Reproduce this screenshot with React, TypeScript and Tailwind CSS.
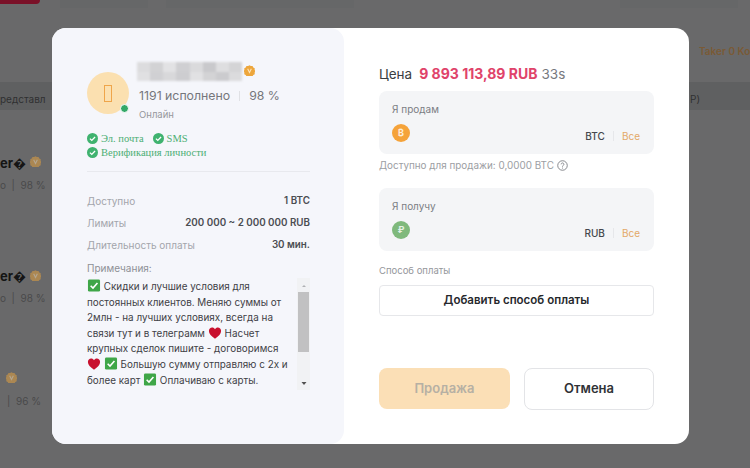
import React from "react";

const font = "font-['Inter','Noto_Sans',sans-serif]";

const CheckBadge = () => (
  <svg width="11" height="11" viewBox="0 0 12 12" className="shrink-0">
    <circle cx="6" cy="6" r="6" fill="#3fb26f" />
    <path d="M3.2 6.1l2 2 3.6-3.8" fill="none" stroke="#fff" strokeWidth="1.4" />
  </svg>
);

const Vip = ({ className }: { className?: string }) => (
  <svg width="11" height="11" viewBox="0 0 12 12" className={className}>
    <path
      d="M6 .2l1.500 1 1.800-.1.8 1.600 1.600.8-.1 1.800 1 1.500-1 1.500.1 1.800-1.600.8-.8 1.600-1.800-.1-1.500 1-1.500-1-1.800.1-.8-1.600-1.600-.8.1-1.800-1-1.500 1-1.500-.1-1.800 1.600-.8.8-1.600 1.800.1z"
      fill="#eda63c"
    />
    <path d="M4 4.200l2 4 2-4" fill="none" stroke="#fde3b8" strokeWidth="1.200" />
  </svg>
);

const GreenBox = () => (
  <svg width="14" height="13" viewBox="0 0 14 14" className="inline-block align-[-2px]">
    <rect x="0.5" y="0.5" width="13" height="13" rx="1.500" fill="#3fa648" />
    <path d="M3.400 7.200l2.500 2.500 4.800-5.400" fill="none" stroke="#fff" strokeWidth="1.700" />
  </svg>
);

const Heart = () => (
  <svg width="14" height="12" viewBox="0 0 14 13" className="inline-block align-[-2px]">
    <path d="M7 12.600C3 9.600.4 7.400.4 4.200.4 2 2 .6 3.900.6 5.200.6 6.300 1.300 7 2.500 7.700 1.300 8.800.6 10.100.6 12 .6 13.600 2 13.600 4.200 13.600 7.400 11 9.600 7 12.600Z" fill="#c8102e" />
  </svg>
);

const blurBlocks = [
  "#dcdcde", "#d2d2d4", "#e2e2e4", "#cfcfd2", "#dadadc", "#c9c9cc", "#dedee0", "#d4d4d6",
  "#e0e0e2", "#d0d0d3", "#d8d8da", "#cdcdd0", "#e1e1e3", "#d3d3d5", "#cbcbce", "#dbdbdd",
];

const Row = ({ label, value }: { label: string; value: string }) => (
  <div className="flex items-center justify-between">
    <span className="text-[10px] text-[#a3a5ab]">{label}</span>
    <span className="text-[9.8px] font-semibold text-[#4b4d52]">{value}</span>
  </div>
);

const AmountBox = ({
  label,
  code,
  icon,
  iconBg,
}: {
  label: string;
  code: string;
  icon: string;
  iconBg: string;
}) => (
  <div className="flex h-[63px] w-[275px] flex-col rounded-lg bg-[#f4f5f7] px-[13px] pt-[11px]">
    <span className="text-[10px] leading-[14px] text-[#7b7d83]">{label}</span>
    <div className="mt-[8px] flex items-start justify-between">
      <span className={`flex h-[18px] w-[18px] items-center justify-center rounded-full text-[9px] font-bold text-white/80 ${iconBg}`}>
        {icon}
      </span>
      <div className="mt-[5px] flex items-center pr-[1px] text-[10px] leading-[14px]">
        <span className="font-medium text-[#45474c]">{code}</span>
        <span className="mx-[8px] h-[10px] w-px bg-[#e6e7ea]" />
        <span className="text-[#e3a868]">Все</span>
      </div>
    </div>
  </div>
);

export default function App() {
  return (
    <div className={`relative h-[468px] w-[750px] overflow-hidden bg-[#69696a] ${font}`}>
      {/* Page behind the dimmed overlay */}
      <div className="absolute left-0 top-0 h-[4px] w-[40px] rounded-br bg-[#7a1128]" />
      <div className="absolute left-[60px] top-0 flex h-[8px] gap-[18px]">
        <div className="w-[88px] bg-[#666768]" />
        <div className="w-[188px] bg-[#666768]" />
      </div>
      <div className="absolute left-[620px] top-0 h-[8px] w-[118px] bg-[#666768]" />
      <div className="absolute left-0 top-[82px] h-[28px] w-[750px] bg-[#5f6061]" />
      <span className="absolute left-0 top-[92px] text-[10px] leading-[14px] text-[#2f3031]">редставл</span>
      <span className="absolute left-[699px] top-[44px] whitespace-nowrap text-[10px] font-semibold leading-[14px] text-[#7a5a35]">Taker 0 Ko</span>
      <span className="absolute left-[690px] top-[92px] text-[10px] leading-[14px] text-[#2f3031]">P)</span>

      <span className="absolute left-0 top-[155px] text-[13px] font-bold leading-[16px] text-[#151515]">er�</span>
      <Vip className="absolute left-[30px] top-[156px] opacity-50" />
      <span className="absolute left-0 top-[178px] text-[10px] leading-[14px] text-[#4a4a4b]">o&nbsp;&nbsp;|&nbsp;&nbsp;98 %</span>
      <span className="absolute left-0 top-[268px] text-[13px] font-bold leading-[16px] text-[#151515]">er�</span>
      <Vip className="absolute left-[30px] top-[270px] opacity-50" />
      <span className="absolute left-0 top-[291px] text-[10px] leading-[14px] text-[#4a4a4b]">o&nbsp;&nbsp;|&nbsp;&nbsp;98 %</span>
      <Vip className="absolute left-[6px] top-[372px] opacity-50" />
      <span className="absolute left-[7px] top-[394px] text-[10px] leading-[14px] text-[#4a4a4b]">|&nbsp;&nbsp;96 %</span>

      {/* Modal */}
      <div className="absolute left-[52px] top-[28px] flex h-[416px] w-[637px] rounded-[14px] bg-white">
        <div className="flex w-[292px] flex-col rounded-[14px] bg-[#f5f6fb] pl-[35px] pr-[34px] pt-[34px]">
          <div className="flex">
            <div className="relative mt-[10px] flex h-[42px] w-[42px] items-center justify-center rounded-full bg-[#fbe0b0]">
              <div className="h-[17px] w-[8px] border-[1.5px] border-[#efa54a]" />
              <div className="absolute bottom-[1px] right-0 h-[9px] w-[9px] rounded-full border border-white bg-[#33a868]" />
            </div>
            <div className="ml-[8px] flex flex-col">
              <div className="flex items-center">
                <div className="grid h-[19px] w-[105px] grid-cols-8 blur-[1px]">
                  {blurBlocks.map((c, i) => (
                    <div key={i} style={{ backgroundColor: c }} />
                  ))}
                </div>
                <Vip className="ml-[2px] mt-[-3px]" />
              </div>
              <div className="ml-[2px] mt-[7px] flex items-center text-[12.3px] leading-[16px] text-[#75777c]">
                <span>1191 исполнено</span>
                <span className="mx-[9px] h-[10px] w-px bg-[#e0e1e5]" />
                <span>98 %</span>
              </div>
              <span className="ml-[2px] mt-[5px] text-[9.5px] leading-[12px] text-[#95979c]">Онлайн</span>
            </div>
          </div>

          <div className="mt-[11px] flex flex-col gap-[1px] font-['Liberation_Serif',serif] text-[10.5px] leading-[13px] text-[#4cae74]">
            <div className="flex items-center gap-[3px]">
              <CheckBadge />
              <span>Эл. почта</span>
              <span className="ml-[6px]"><CheckBadge /></span>
              <span>SMS</span>
            </div>
            <div className="flex items-center gap-[3px]">
              <CheckBadge />
              <span>Верификация личности</span>
            </div>
          </div>

          <div className="mt-[12px] h-px w-full bg-[#e8e9ee]" />

          <div className="mt-[22px] flex flex-col gap-[8px] leading-[14px]">
            <Row label="Доступно" value="1 BTC" />
            <Row label="Лимиты" value="200 000 ~ 2 000 000 RUB" />
            <Row label="Длительность оплаты" value="30 мин." />
          </div>

          <span className="mt-[9px] text-[10px] leading-[14px] text-[#8e9096]">Примечания:</span>
          <div className="mt-[3px] flex h-[112px] justify-between">
            <p className="mt-[1px] w-[205px] text-[9.9px] leading-[15.6px] text-[#3f4146]">
              <GreenBox /> Скидки и лучшие условия для постоянных клиентов. Меняю суммы от 2млн - на лучших условиях, всегда на связи тут и в телеграмм <Heart /> Насчет крупных сделок пишите - договоримся <Heart /> <GreenBox /> Большую сумму отправляю с 2х и более карт <GreenBox /> Оплачиваю с карты.
            </p>
            <div className="flex w-[13px] flex-col items-center bg-[#f1f2f4]">
              <svg width="8" height="14" viewBox="0 0 8 14"><path d="M2 9l2-2 2 2z" fill="#b0b1b4" /></svg>
              <div className="h-[60px] w-[11px] bg-[#c1c1c2]" />
              <svg width="8" height="38" viewBox="0 0 8 38" className="mt-auto"><path d="M1.500 30h5L4 33z" fill="#505050" /></svg>
            </div>
          </div>
        </div>

        <div className="flex flex-1 flex-col pl-[35px] pt-[38px]">
          <div className="flex items-baseline text-[13.5px] leading-[16px]">
            <span className="text-[#3b3d42]">Цена</span>
            <span className="ml-[7px] text-[14px] font-bold text-[#e0436a]">9 893 113,89 RUB</span>
            <span className="ml-[4px] text-[#77797e]">33s</span>
          </div>
          <div className="mt-[9px]">
            <AmountBox label="Я продам" code="BTC" icon="₿" iconBg="bg-[#f5a33a]" />
          </div>
          <div className="mt-[4px] flex items-center gap-[3px] text-[9.9px] leading-[14px] text-[#9c9ea3]">
            <span>Доступно для продажи: 0,0000 BTC</span>
            <svg width="11" height="11" viewBox="0 0 12 12">
              <circle cx="6" cy="6" r="5.200" fill="none" stroke="#7d7f84" strokeWidth="1" />
              <path d="M4.500 4.700a1.500 1.500 0 1 1 2.300 1.300c-.6.4-.8.6-.8 1.200" fill="none" stroke="#7d7f84" strokeWidth="1" />
              <circle cx="6" cy="8.800" r=".6" fill="#7d7f84" />
            </svg>
          </div>
          <div className="mt-[16px]">
            <AmountBox label="Я получу" code="RUB" icon="₽" iconBg="bg-[#7fb97c]" />
          </div>
          <span className="mt-[13px] text-[9.500px] leading-[14px] text-[#94969b]">Способ оплаты</span>
          <button className="mt-[7px] h-[31px] w-[275px] rounded border border-[#e6e7ea] text-[11.500px] font-semibold text-[#26282c]">
            Добавить способ оплаты
          </button>
          <div className="mt-[52px] flex w-[275px] justify-between">
            <button className="h-[41px] w-[131px] rounded-lg bg-[#fbdfb6] text-[13px] font-semibold text-[#b6b0a4]">
              Продажа
            </button>
            <button className="h-[42px] w-[130px] rounded-lg border border-[#e3e4e7] text-[13px] font-semibold text-[#303236]">
              Отмена
            </button>
          </div>
        </div>
      </div>
    </div>
  );
}
